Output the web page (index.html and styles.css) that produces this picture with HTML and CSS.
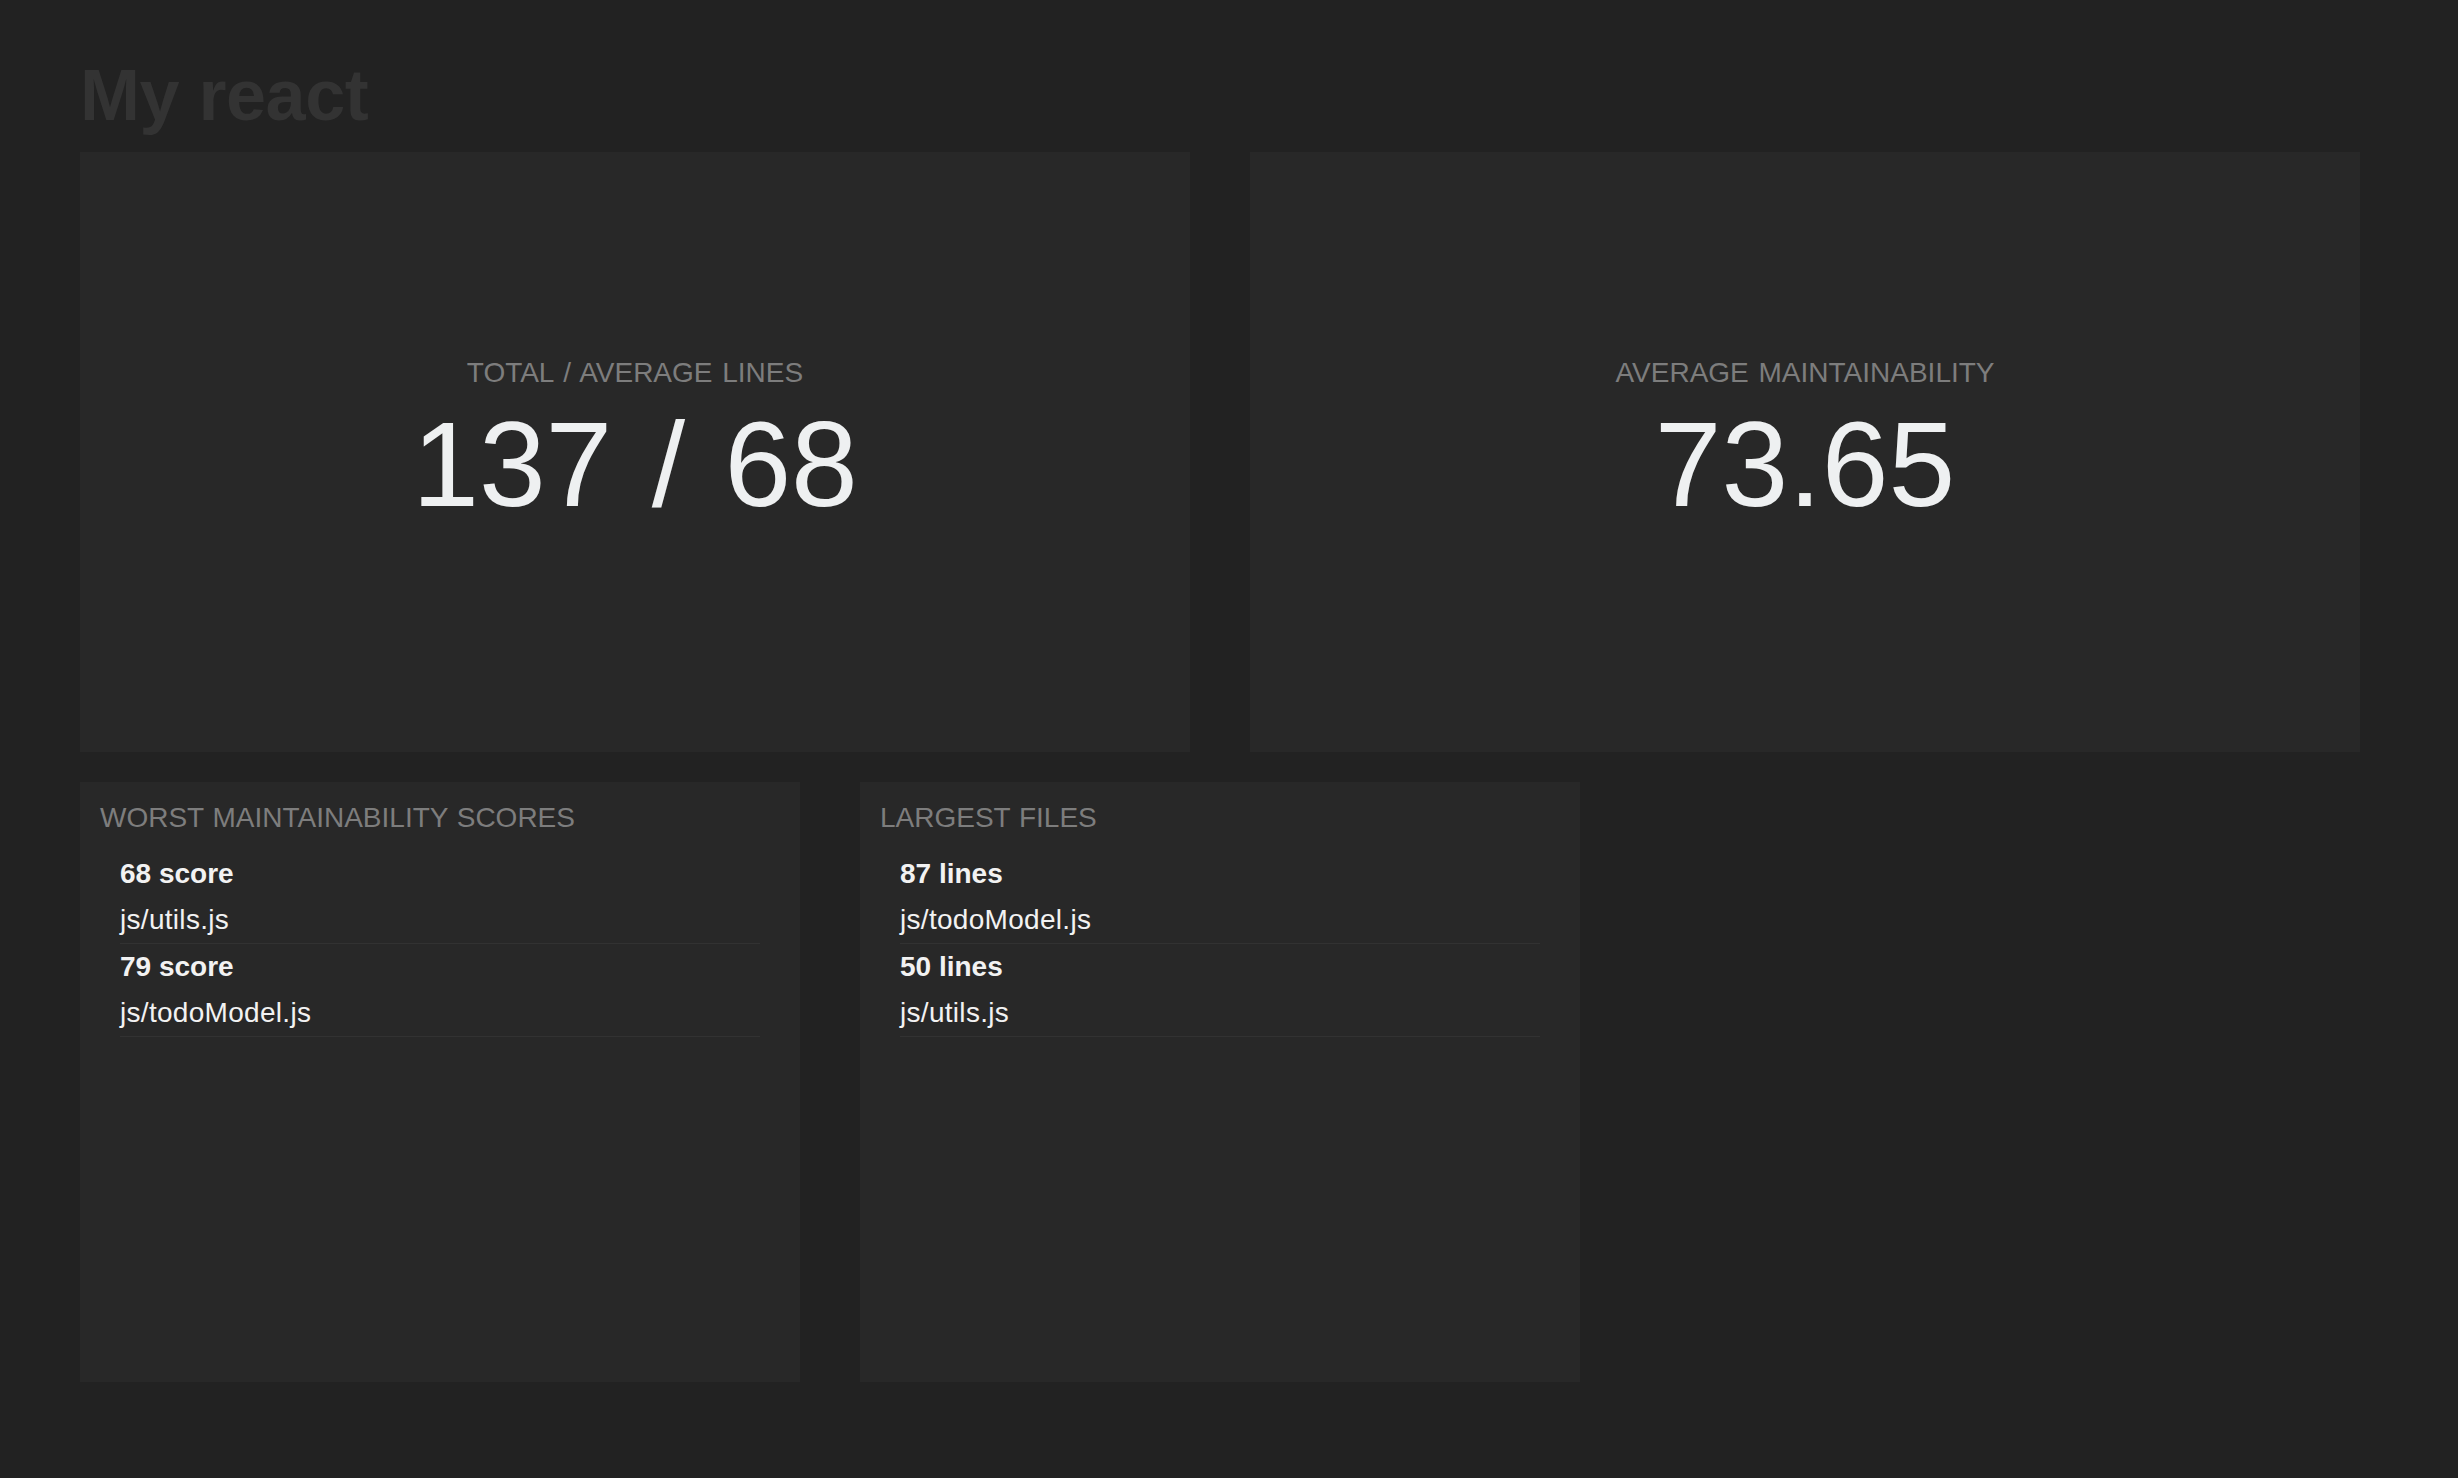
FILE: index.html
```html
<!DOCTYPE html>
<html>
<head>
<meta charset="utf-8">
<title>My react</title>
<link rel="stylesheet" href="styles.css">
</head>
<body>
<div class="page">
  <h1 class="title">My react</h1>
  <div class="grid">
    <section class="card stat">
      <div class="stat-label">TOTAL / AVERAGE LINES</div>
      <div class="stat-value">137 / 68</div>
    </section>
    <section class="card stat">
      <div class="stat-label">AVERAGE MAINTAINABILITY</div>
      <div class="stat-value">73.65</div>
    </section>
    <section class="card list-card">
      <h2 class="card-heading">WORST MAINTAINABILITY SCORES</h2>
      <ul class="list">
        <li class="item"><div class="item-value">68 score</div><div class="item-name">js/utils.js</div></li>
        <li class="item"><div class="item-value">79 score</div><div class="item-name">js/todoModel.js</div></li>
      </ul>
    </section>
    <section class="card list-card">
      <h2 class="card-heading">LARGEST FILES</h2>
      <ul class="list">
        <li class="item"><div class="item-value">87 lines</div><div class="item-name">js/todoModel.js</div></li>
        <li class="item"><div class="item-value">50 lines</div><div class="item-name">js/utils.js</div></li>
      </ul>
    </section>
  </div>
</div>
</body>
</html>
```
FILE: styles.css
```css
html, body {
  margin: 0;
  padding: 0;
  background: #222222;
  font-family: "Liberation Sans", Arial, sans-serif;
}
.page {
  width: 2280px;
  padding: 52px 0 0 80px;
}
.title {
  margin: 0 0 14px 0;
  font-size: 72px;
  line-height: 86px;
  font-weight: bold;
  color: #333333;
  letter-spacing: -0.5px;
}
.grid {
  display: grid;
  grid-template-columns: repeat(6, 1fr);
  grid-template-rows: 600px 600px;
  column-gap: 60px;
  row-gap: 30px;
}
.card {
  background: #282828;
  box-sizing: border-box;
}
.stat {
  grid-column: span 3;
  display: flex;
  flex-direction: column;
  align-items: center;
  justify-content: center;
  padding-bottom: 25px;
}
.stat-label {
  font-size: 28px;
  line-height: 34px;
  color: #7d7d7d;
  font-weight: 300;
  word-spacing: 2px;
}
.stat-value {
  margin-top: 14px;
  font-size: 120px;
  line-height: 120px;
  color: #eef0f1;
  word-spacing: 6px;
}
.list-card {
  grid-column: span 2;
  padding: 19px 20px 20px 20px;
}
.card-heading {
  margin: 0 0 16px 0;
  font-size: 28px;
  line-height: 34px;
  font-weight: 300;
  color: #7d7d7d;
  word-spacing: 1px;
}
.list {
  list-style: none;
  margin: 0;
  padding: 0 20px;
}
.item {
  border-bottom: 1px solid #323232;
  font-size: 28px;
  line-height: 46px;
  color: #f2f2f2;
}
.item-value {
  font-weight: bold;
}
.item-name {
  letter-spacing: 0.3px;
}
```
